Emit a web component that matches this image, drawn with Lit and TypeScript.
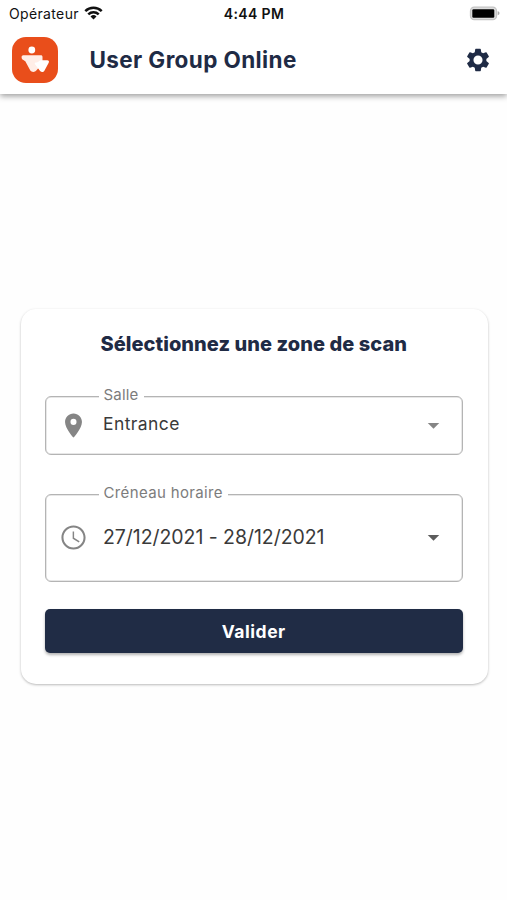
import { LitElement, html, css, svg } from "lit";
import { customElement, property } from "lit/decorators.js";

const pin = svg`<path d="M12 2C8.13 2 5 5.13 5 9c0 5.25 7 13 7 13s7-7.75 7-13c0-3.87-3.13-7-7-7zm0 9.5a2.5 2.5 0 1 1 0-5 2.5 2.5 0 0 1 0 5z"/>`;
const clock = svg`<path d="M11.99 2C6.47 2 2 6.48 2 12s4.47 10 9.99 10C17.52 22 22 17.52 22 12S17.52 2 11.99 2zM12 20.3c-4.58 0-8.3-3.72-8.3-8.3s3.72-8.3 8.3-8.3 8.3 3.72 8.3 8.3-3.72 8.3-8.3 8.3z"/><path d="M12.5 7H11.300v6l5.100 3.100.65-1.100-4.550-2.700z"/>`;

@customElement("select-field")
class SelectField extends LitElement {
  @property() label = "";
  @property() value = "";
  @property() icon = "pin";

  static styles = css`
    :host { display: block; }
    .box {
      position: relative;
      box-sizing: border-box;
      height: 59px;
      border: 1px solid #b4b4b4;
      box-shadow: inset 0 0 0 0.5px #d0d0d0;
      border-radius: 6px;
      display: flex;
      align-items: center;
      padding: 0 16px 0 13.500px;
    }
    .box.tall { height: 88px; }
    .label {
      position: absolute;
      left: 53px;
      top: -12px;
      height: 20px;
      line-height: 20px;
      padding: 0 5px;
      background: #fff;
      color: #7c7c7c;
      font-size: 15px;
      letter-spacing: 0.2px;
      white-space: nowrap;
    }
    .tall .label { letter-spacing: 0.36px; }
    .icon { width: 29px; height: 29px; fill: #858585; flex: none; }
    .tall .icon { margin-bottom: 1px; }
    .value {
      flex: 1;
      margin-left: 15px;
      padding-bottom: 4px;
      font-size: 17.500px;
      line-height: 24px;
      color: #3a3a3a;
      letter-spacing: 0.4px;
      white-space: nowrap;
    }
    .tall .value { font-size: 19.5px; padding-bottom: 2px; letter-spacing: -0.05px; }
    .arrow { width: 25px; height: 25px; fill: #858585; flex: none; }
    .tall .arrow { fill: #5c5c5c; margin-bottom: 2px; }
  `;

  render() {
    const tall = this.icon === "clock";
    return html`<div class="box ${tall ? "tall" : ""}">
      <span class="label">${this.label}</span>
      <svg class="icon" viewBox="0 0 24 24">${tall ? clock : pin}</svg>
      <span class="value">${this.value}</span>
      <svg class="arrow" viewBox="0 0 24 24"><path d="M6.500 9.500h11L12 15z"/></svg>
    </div>`;
  }
}

@customElement("app-root")
class AppRoot extends LitElement {
  static styles = css`
    :host {
      display: flex;
      flex-direction: column;
      height: 900px;
      overflow: hidden;
      background: #fefefe;
      font-family: Inter, "Noto Sans", sans-serif;
      color: #1f2b45;
    }
    .top {
      height: 94px;
      flex: none;
      background: #fff;
      box-shadow: 0 2px 6px rgba(0, 0, 0, 0.4);
    }
    .status {
      display: grid;
      grid-template-columns: 1fr auto 1fr;
      align-items: center;
      height: 28px;
      padding: 0 7px 0 9px;
      color: #111;
      font-size: 14px;
      line-height: 28px;
    }
    .carrier { display: flex; align-items: center; gap: 5px; letter-spacing: 0.35px; }
    .wifi { width: 19px; height: 14px; margin-top: -2px; }
    .time { font-weight: 600; font-size: 14px; letter-spacing: 0.35px; margin-right: 1px; }
    .battery { justify-self: end; width: 31px; height: 15px; margin-top: -2px; }
    .bar { display: flex; align-items: center; height: 64px; padding: 0 15px 0 12px; }
    .logo { width: 46px; height: 46px; flex: none; }
    .title {
      flex: 1;
      margin: 0 0 0 31.500px;
      font-size: 22.500px;
      line-height: 30px;
      font-weight: 700;
      letter-spacing: 0.38px;
      white-space: nowrap;
    }
    .gear { width: 28px; height: 28px; fill: #1f2b45; }
    .card {
      box-sizing: border-box;
      width: 467px;
      height: 375px;
      margin: 215px 0 0 20.500px;
      padding: 20px 24.500px 0 24px;
      background: #fff;
      border-radius: 15px;
      box-shadow: 0 1px 2.500px rgba(0, 0, 0, 0.27);
      display: flex;
      flex-direction: column;
    }
    .heading {
      margin: 0 0 37px;
      text-align: center;
      font-size: 20px;
      line-height: 30px;
      font-weight: 800;
      letter-spacing: 0.05px;
      white-space: nowrap;
    }
    .second { margin-top: 39px; }
    .submit {
      height: 44px;
      margin-top: 27px;
      padding: 0;
      border: 0;
      border-radius: 5px;
      background: #202c45;
      color: #fff;
      font: 700 17.500px/43px Inter, "Noto Sans", sans-serif;
      letter-spacing: 0.55px;
      box-shadow: 0 2px 3px rgba(0, 0, 0, 0.3);
    }
  `;

  render() {
    return html`
      <header class="top">
        <div class="status">
          <span class="carrier">Opérateur
            <svg class="wifi" viewBox="0 0 19 14">
              <g fill="none" stroke="#111" stroke-width="2.500">
                <path d="M1.300 5.200a11.700 11.700 0 0 1 16.400 0"/>
                <path d="M4.300 8.400a7.400 7.400 0 0 1 10.400 0"/>
              </g>
              <path fill="#111" d="M6.500 10.500a4.300 4.300 0 0 1 6 0l-3 3z"/>
            </svg>
          </span>
          <span class="time">4:44 PM</span>
          <svg class="battery" viewBox="0 0 31 15">
            <rect x="1.500" y="1.200" width="26" height="12.500" rx="3.700" fill="#ddd" stroke="#c4c4c4" stroke-width="1.300"/>
            <rect x="3.300" y="3.200" width="22" height="8.500" rx="1.200" fill="#000"/>
            <path d="M28.700 5.300c2.400.7 2.400 3.200 0 3.900z" fill="#aaa"/>
          </svg>
        </div>
        <div class="bar">
          <svg class="logo" viewBox="0 0 46 46">
            <rect width="46" height="46" rx="14" fill="#e94e1b"/>
            <circle cx="19.800" cy="13" r="3.400" fill="#fff"/>
            <path d="M11.300 18.300h17.500c1.100 0 1.700.6 1.700 1.700v6.500L24.300 33.500c-1.200 1.900-4.800 1.900-6 0L13.300 24.200l-2.700-1.700c-.7-.5-1-1.200-1-2.300 0-1.200.6-1.900 1.700-1.900z" fill="#ffeee7"/>
            <path d="M23.500 25.500c1.300 0 2.600-.4 3.500-1.200.7-.7 1.200-1 2.200-1h6c1.600 0 2.200 1.200 1.500 2.500l-4.300 8c-.9 1.700-3.200 1.700-4.300.2L23 27.200c-.5-.8-.3-1.500.5-1.700z" fill="#fff"/>
          </svg>
          <h1 class="title">User Group Online</h1>
          <svg class="gear" viewBox="0 0 24 24">
            <path d="M19.140 12.940c.04-.3.060-.61.060-.94 0-.32-.02-.64-.07-.94l2.030-1.580a.49.49 0 0 0 .12-.61l-1.920-3.320a.488.488 0 0 0-.59-.22l-2.390.96c-.5-.38-1.030-.7-1.620-.94l-.36-2.540a.484.484 0 0 0-.48-.41h-3.840c-.24 0-.43.17-.47.41l-.36 2.540c-.59.24-1.130.57-1.620.94l-2.390-.96c-.22-.08-.47 0-.59.22L2.740 8.870c-.12.21-.08.47.12.61l2.030 1.580c-.05.3-.09.63-.09.94s.02.64.070.94l-2.030 1.580a.49.49 0 0 0-.12.61l1.920 3.320c.12.22.37.29.59.22l2.390-.96c.5.38 1.030.7 1.620.94l.36 2.540c.05.24.24.41.48.41h3.840c.24 0 .44-.17.47-.41l.36-2.540c.59-.24 1.130-.56 1.620-.94l2.390.96c.22.08.47 0 .59-.22l1.920-3.320c.12-.22.070-.47-.12-.61zM12 15.900a3.900 3.900 0 1 1 0-7.800 3.900 3.900 0 0 1 0 7.800z"/>
          </svg>
        </div>
      </header>
      <main class="card">
        <h2 class="heading">Sélectionnez une zone de scan</h2>
        <select-field label="Salle" value="Entrance" icon="pin"></select-field>
        <select-field class="second" label="Créneau horaire" value="27/12/2021 - 28/12/2021" icon="clock"></select-field>
        <button class="submit">Valider</button>
      </main>
    `;
  }
}
